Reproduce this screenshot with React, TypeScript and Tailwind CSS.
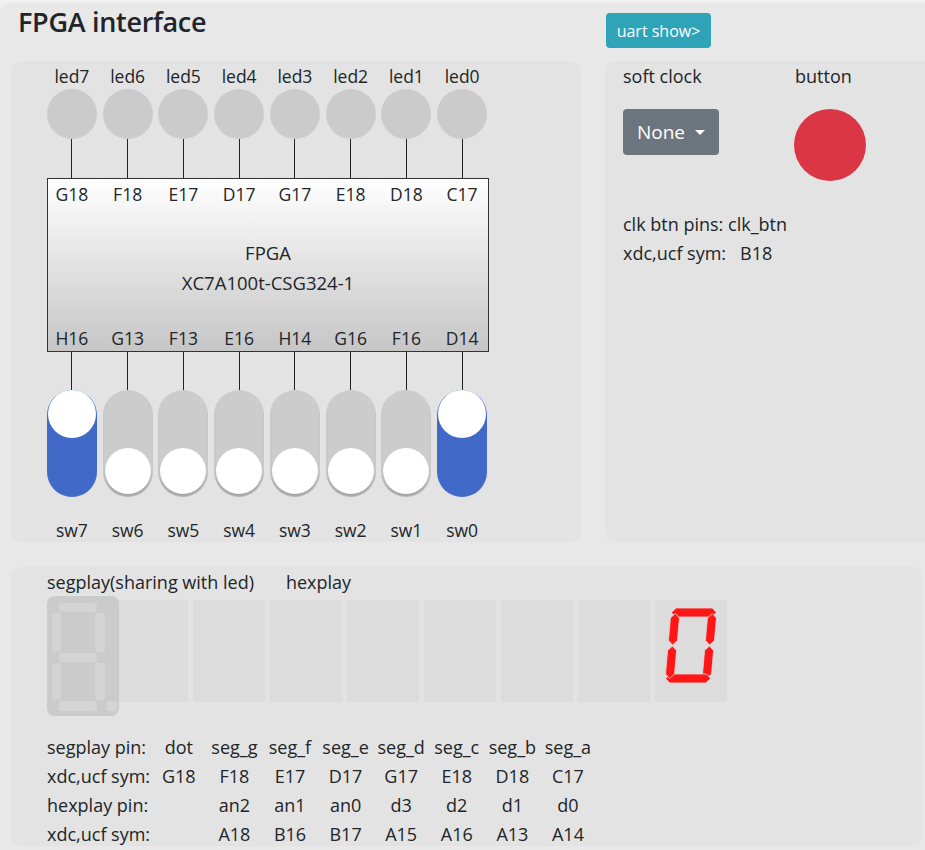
import React from "react";

const leds = ["led7", "led6", "led5", "led4", "led3", "led2", "led1", "led0"];
const topPins = ["G18", "F18", "E17", "D17", "G17", "E18", "D18", "C17"];
const botPins = ["H16", "G13", "F13", "E16", "H14", "G16", "F16", "D14"];
const switches = [
  { name: "sw7", on: true },
  { name: "sw6", on: false },
  { name: "sw5", on: false },
  { name: "sw4", on: false },
  { name: "sw3", on: false },
  { name: "sw2", on: false },
  { name: "sw1", on: false },
  { name: "sw0", on: true },
];

const pinRows = [
  ["segplay pin:", "dot", "seg_g", "seg_f", "seg_e", "seg_d", "seg_c", "seg_b", "seg_a"],
  ["xdc,ucf sym:", "G18", "F18", "E17", "D17", "G17", "E18", "D18", "C17"],
  ["hexplay pin:", "", "an2", "an1", "an0", "d3", "d2", "d1", "d0"],
  ["xdc,ucf sym:", "", "A18", "B16", "B17", "A15", "A16", "A13", "A14"],
];

// horizontal / vertical hexagon segment helpers
const hSeg = (x1: number, x2: number, y: number, t = 9) =>
  `${x1},${y + t / 2} ${x1 + t / 2},${y} ${x2 - t / 2},${y} ${x2},${y + t / 2} ${x2 - t / 2},${y + t} ${x1 + t / 2},${y + t}`;
const vSeg = (x: number, y1: number, y2: number, t = 9) =>
  `${x + t / 2},${y1} ${x + t},${y1 + t / 2} ${x + t},${y2 - t / 2} ${x + t / 2},${y2} ${x},${y2 - t / 2} ${x},${y1 + t / 2}`;

function ZeroDigit() {
  return (
    <svg width="72" height="102" viewBox="0 0 72 102">
      <g transform="translate(4 0) skewX(-5)" fill="#ff1616" stroke="#dcdcdc" strokeWidth="0.8">
        <polygon points={hSeg(13.5, 58.5, 8)} />
        <polygon points={vSeg(50, 13.5, 45)} />
        <polygon points={vSeg(50, 46, 78.5)} />
        <polygon points={hSeg(13.5, 58.5, 74)} />
        <polygon points={vSeg(13, 46, 78.5)} />
        <polygon points={vSeg(13, 13.5, 45)} />
      </g>
    </svg>
  );
}

function SegPlay() {
  return (
    <div className="relative z-10 w-[72px] h-[120px] rounded-[8px] bg-[#cbcbcb] shrink-0">
      <div className="absolute left-[12px] top-[7px] w-[38px] h-[9px] rounded-[2px] bg-[#d4d4d4]" />
      <div className="absolute left-[5px] top-[17px] w-[9px] h-[39px] rounded-[2px] bg-[#d4d4d4]" />
      <div className="absolute left-[48px] top-[17px] w-[10px] h-[39px] rounded-[2px] bg-[#d4d4d4]" />
      <div className="absolute left-[12px] top-[57px] w-[38px] h-[9px] rounded-[2px] bg-[#d4d4d4]" />
      <div className="absolute left-[5px] top-[67px] w-[9px] h-[37px] rounded-[2px] bg-[#d4d4d4]" />
      <div className="absolute left-[48px] top-[67px] w-[10px] h-[37px] rounded-[2px] bg-[#d4d4d4]" />
      <div className="absolute left-[12px] top-[105px] w-[38px] h-[10px] rounded-[2px] bg-[#d4d4d4]" />
      <div className="absolute left-[60px] top-[105px] w-[10px] h-[10px] rounded-[2px] bg-[#d4d4d4]" />
    </div>
  );
}

export default function App() {
  return (
    <div className="w-[925px] h-[850px] overflow-hidden bg-[#f0f0f0] pt-[3px] font-['Open_Sans',sans-serif] text-[#212529]">
      <div className="w-[960px] h-[900px] bg-[#e8e8e8] rounded-tl-[10px]">
        {/* header */}
        <div className="flex items-start h-[58px]">
          <div className="w-[606px] pl-[18px] pt-[1px] text-[27px] leading-[36px] font-semibold tracking-[-0.3px]">FPGA interface</div>
          <button className="mt-[10px] w-[105px] h-[35px] rounded-[4px] bg-[#2fa4b8] text-white text-[16px]">
            uart show&gt;
          </button>
        </div>

        <div className="flex gap-[24px] pl-[11px]">
          {/* board panel */}
          <div className="w-[570px] h-[481px] rounded-[10px] bg-[#e3e3e3] pt-[3px] pl-[33px] text-[17.5px]">
            <div className="grid grid-cols-[repeat(8,55.75px)] w-[446px]">
              {leds.map((l) => (
                <div key={l} className="flex flex-col items-center">
                  <div className="h-[24px] leading-[24px]">{l}</div>
                  <div className="mt-[1px] w-[50px] h-[50px] rounded-full bg-[#cbcbcb]" />
                  <div className="w-px h-[39px] bg-[#222]" />
                </div>
              ))}
            </div>

            <div className="ml-[3px] w-[442px] h-[174px] border border-[#333] bg-gradient-to-b from-white to-[#c6c6c6] flex flex-col">
              <div className="-ml-[4px] w-[446px] grid grid-cols-[repeat(8,55.75px)] pt-[3px]">
                {topPins.map((p) => (
                  <div key={p} className="text-center leading-[24px]">{p}</div>
                ))}
              </div>
              <div className="mt-[32px] text-center leading-[30px] text-[18.5px]">
                <div>FPGA</div>
                <div>XC7A100t-CSG324-1</div>
              </div>
              <div className="mt-auto -ml-[4px] w-[446px] grid grid-cols-[repeat(8,55.75px)] pb-[1px]">
                {botPins.map((p) => (
                  <div key={p} className="text-center leading-[24px]">{p}</div>
                ))}
              </div>
            </div>

            <div className="grid grid-cols-[repeat(8,55.75px)] w-[446px]">
              {switches.map((s) => (
                <div key={s.name} className="flex flex-col items-center">
                  <div className="w-px h-[38px] bg-[#222]" />
                  {s.on ? (
                    <div className="w-[50px] h-[107px] rounded-full bg-[#4169c8] flex flex-col items-center pt-0">
                      <div className="w-[48px] h-[48px] rounded-full bg-white" />
                    </div>
                  ) : (
                    <div className="w-[50px] h-[107px] rounded-full bg-[#cccccc] flex flex-col items-center justify-end pb-[3px] shadow-[inset_0_-3px_3px_rgba(0,0,0,0.06)]">
                      <div className="w-[46px] h-[46px] rounded-full bg-white shadow-[0_2px_2px_rgba(0,0,0,0.18)]" />
                    </div>
                  )}
                  <div className="mt-[21px] h-[24px] leading-[24px]">{s.name}</div>
                </div>
              ))}
            </div>
          </div>

          {/* clock / button panel */}
          <div className="w-[340px] h-[481px] rounded-[10px] bg-[#e3e3e3] pt-[3px] pl-[18px] text-[18px]">
            <div className="flex">
              <div className="w-[172px] h-[24px] leading-[24px]">soft clock</div>
              <div className="h-[24px] leading-[24px]">button</div>
            </div>
            <div className="flex mt-[21px] items-start">
              <button className="w-[96px] h-[46px] rounded-[4px] bg-[#6c757d] text-white text-[19px] flex items-center justify-center gap-[10px]">
                <span>None</span>
                <span className="w-0 h-0 border-x-[5px] border-x-transparent border-t-[5px] border-t-white" />
              </button>
              <div className="ml-[75px] w-[72px] h-[72px] rounded-full bg-[#db3646]" />
            </div>
            <div className="mt-[29px] leading-[29px]">
              <div>clk btn pins: clk_btn</div>
              <div>
                xdc,ucf sym:<span className="ml-[14px]">B18</span>
              </div>
            </div>
          </div>
        </div>

        {/* seg display panel */}
        <div className="ml-[11px] mt-[25px] w-[911px] h-[279px] rounded-[10px] bg-[#e3e3e3] pl-[36px] pt-[3px] text-[18px]">
          <div className="flex h-[24px] leading-[24px]">
            <span>segplay(sharing with led)</span>
            <span className="ml-[32px]">hexplay</span>
          </div>
          <div className="flex items-start mt-[2px]">
            <SegPlay />
            <div className="flex gap-[5px] -ml-[3px] mt-[4px]">
              {Array.from({ length: 8 }).map((_, i) => (
                <div key={i} className="w-[72px] h-[102px] bg-[#dcdcdc]">
                  {i === 7 && <ZeroDigit />}
                </div>
              ))}
            </div>
          </div>
          <div className="mt-[17px] text-[18px]">
            {pinRows.map((row, r) => (
              <div key={r} className="grid grid-cols-[104px_repeat(8,55.6px)] h-[29px] leading-[29px]">
                {row.map((c, i) => (
                  <div key={i} className={i === 0 ? "text-left whitespace-nowrap" : "text-center"}>
                    {c}
                  </div>
                ))}
              </div>
            ))}
          </div>
        </div>
      </div>
    </div>
  );
}
